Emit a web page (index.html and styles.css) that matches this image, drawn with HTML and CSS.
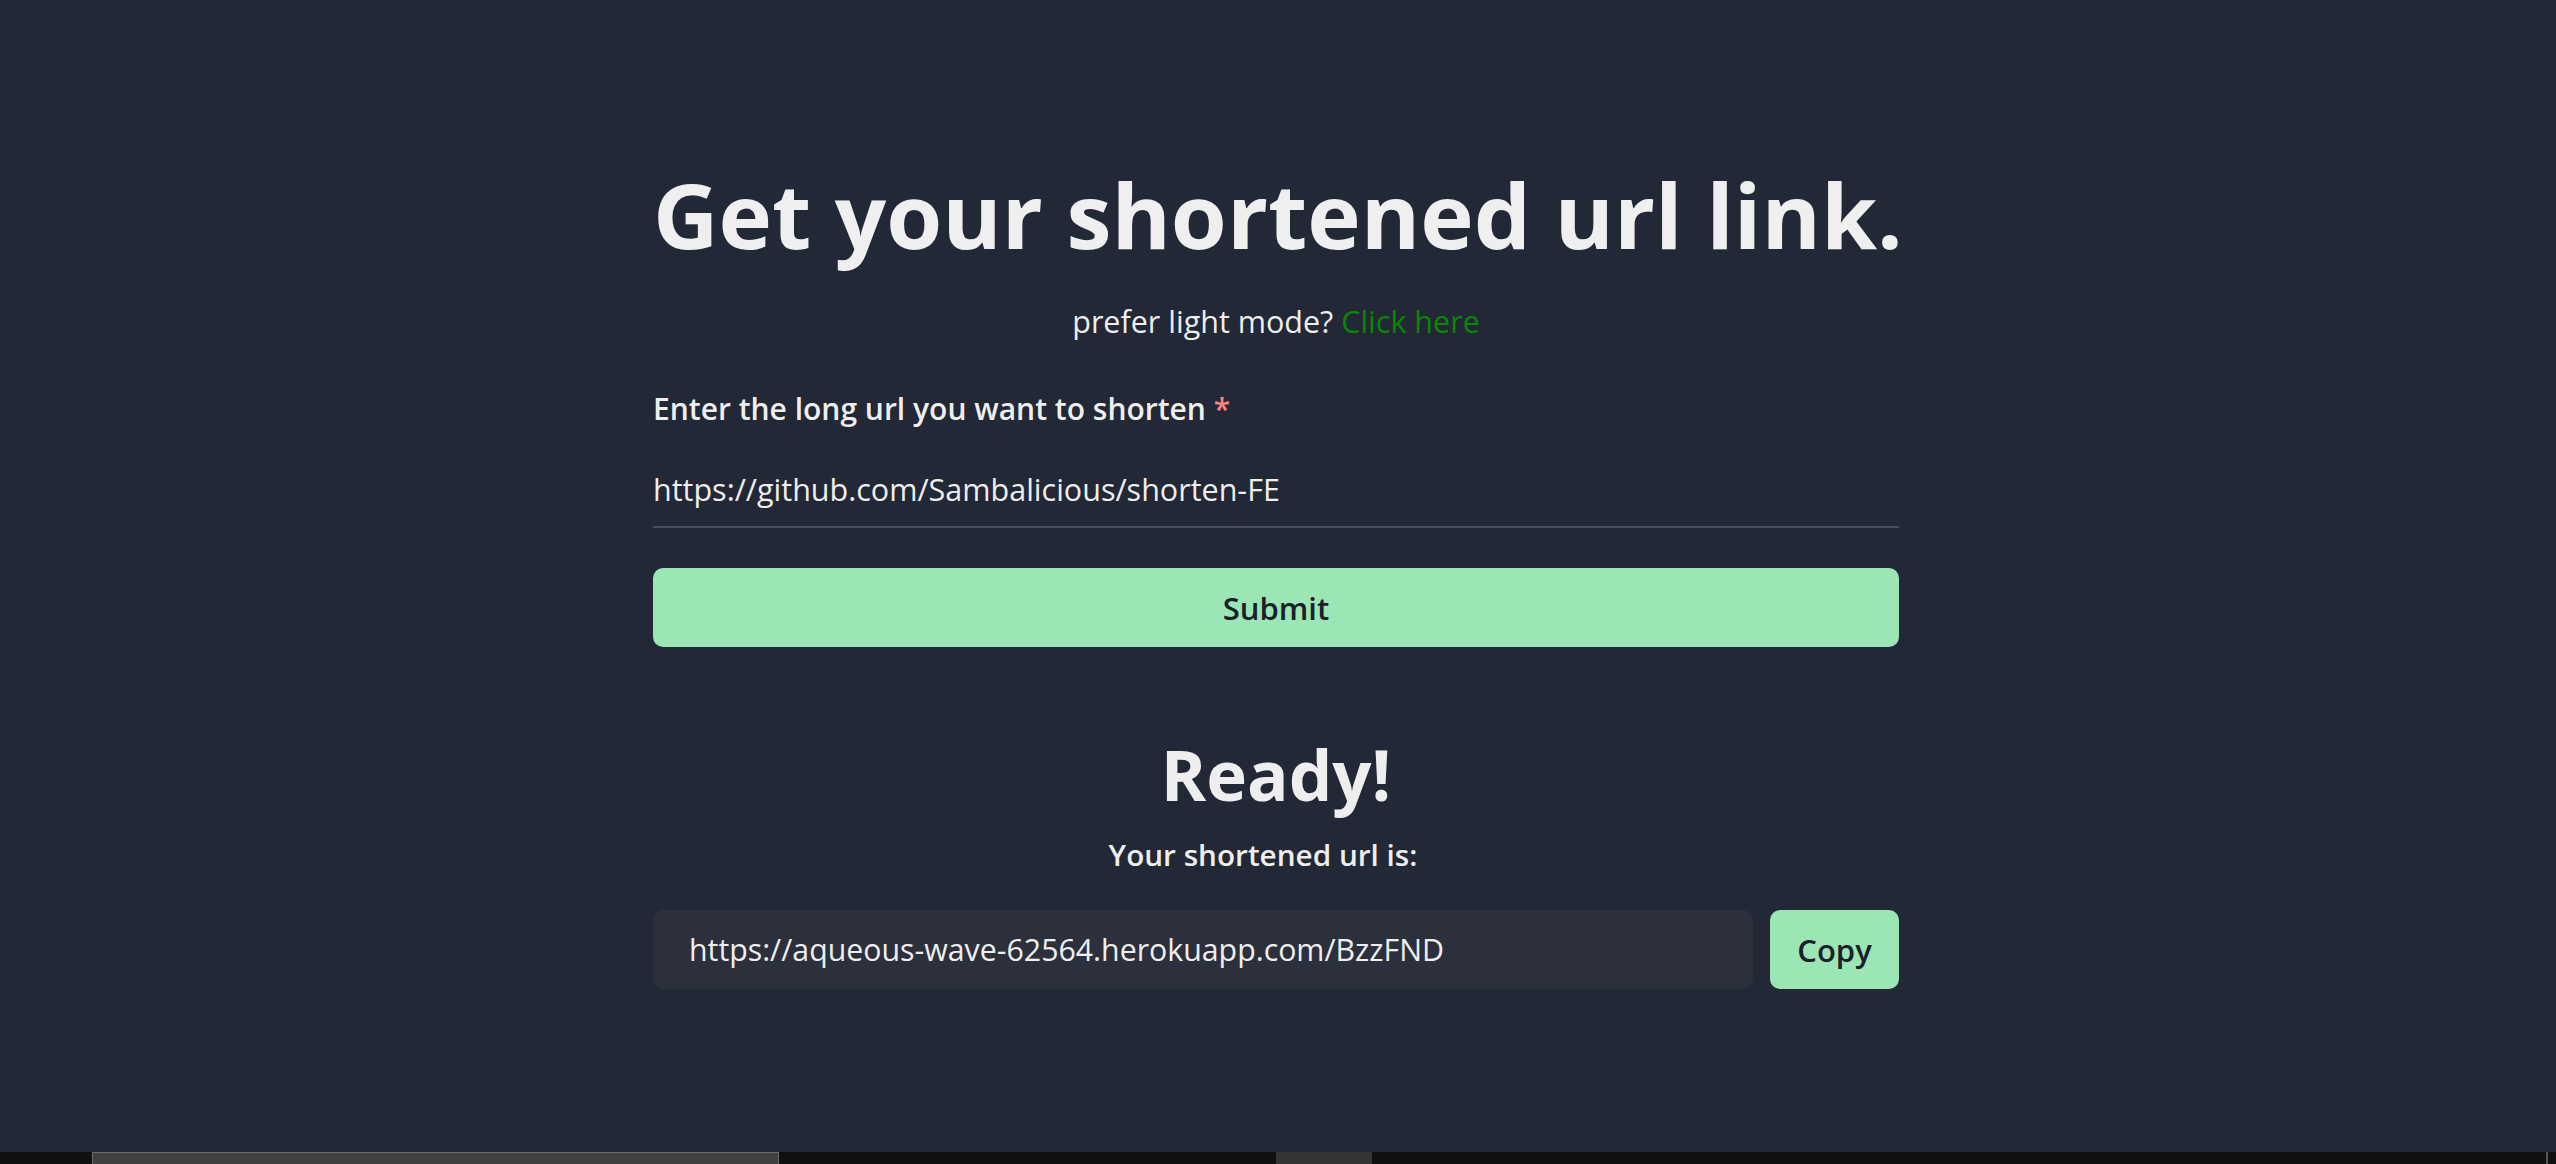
FILE: index.html
```html
<!DOCTYPE html>
<html lang="en">
<head>
<meta charset="utf-8">
<title>Shorten</title>
<link rel="stylesheet" href="styles.css">
</head>
<body>
<div class="page">
  <main class="container">
    <h1 class="title">Get your shortened url link.</h1>
    <p class="mode">prefer light mode? <a class="mode-link" href="#">Click here</a></p>
    <form class="form">
      <label class="label">Enter the long url you want to shorten <span class="req">*</span></label>
      <div class="input">https://github.com/Sambalicious/shorten-FE</div>
      <button class="submit" type="button">Submit</button>
    </form>
    <section class="result">
      <h2 class="ready">Ready!</h2>
      <p class="your">Your shortened url is:</p>
      <div class="copy-row">
        <div class="url-box">https://aqueous-wave-62564.herokuapp.com/BzzFND</div>
        <button class="copy" type="button">Copy</button>
      </div>
    </section>
  </main>
  <div class="taskbar">
    <div class="tb-thumb"></div>
    <div class="tb-block"></div>
    <div class="tb-end"></div>
  </div>
</div>
</body>
</html>
```

FILE: styles.css
```css
html, body {
  margin: 0;
  padding: 0;
  height: 100%;
  background: #222835;
}
body {
  font-family: "Open Sans", "Noto Sans", sans-serif;
  color: #eeeeee;
}
.page {
  height: 1164px;
  display: flex;
  flex-direction: column;
}
.container {
  flex: 1;
  width: 1246px;
  margin-left: calc(50% - 625px);
  padding-top: 154px;
  box-sizing: border-box;
}
.title {
  margin: 0;
  font-size: 90.5px;
  font-weight: 700;
  line-height: 120px;
  text-align: center;
  white-space: nowrap;
  color: #efefef;
}
.mode {
  margin: 27px 0 0;
  font-size: 30.5px;
  line-height: 40px;
  text-align: center;
}
.mode-link {
  color: #0a850a;
  text-decoration: none;
}
.form {
  display: flex;
  flex-direction: column;
  margin-top: 48px;
}
.label {
  font-size: 30px;
  font-weight: 600;
  line-height: 40px;
}
.req {
  color: #fc8181;
}
.input {
  margin-top: 40px;
  font-size: 30.5px;
  line-height: 40px;
  padding-bottom: 17px;
  border-bottom: 2px solid #4a4e5a;
}
.submit {
  margin-top: 40px;
  height: 79px;
  border: 0;
  border-radius: 10px;
  background: #9ae6b4;
  color: #1a202c;
  font-family: inherit;
  font-size: 31px;
  font-weight: 600;
}
.result {
  margin-top: 87px;
  display: flex;
  flex-direction: column;
  align-items: center;
}
.ready {
  margin: 0;
  font-size: 69px;
  font-weight: 700;
  line-height: 80px;
}
.your {
  margin: 21px 0 0;
  padding-right: 26px;
  font-size: 29.7px;
  font-weight: 600;
  line-height: 40px;
}
.copy-row {
  margin-top: 35px;
  align-self: stretch;
  display: flex;
  gap: 17px;
  height: 79px;
}
.url-box {
  flex: 1;
  display: flex;
  align-items: center;
  padding-left: 36px;
  border-radius: 10px;
  background: #2c303c;
  font-size: 30.3px;
}
.copy {
  width: 129px;
  border: 0;
  border-radius: 10px;
  background: #9ae6b4;
  color: #1a202c;
  font-family: inherit;
  font-size: 31px;
  font-weight: 600;
}
.taskbar {
  height: 12px;
  background: #101010;
  display: flex;
  align-items: stretch;
}
.tb-thumb {
  margin-left: 92px;
  width: 685px;
  background: #404040;
  border: 1px solid #6a6a6a;
  border-bottom: 0;
}
.tb-block {
  margin-left: 497px;
  width: 96px;
  background: #353535;
}
.tb-end {
  margin-left: auto;
  margin-right: 8px;
  width: 2px;
  background: #555;
}
```
